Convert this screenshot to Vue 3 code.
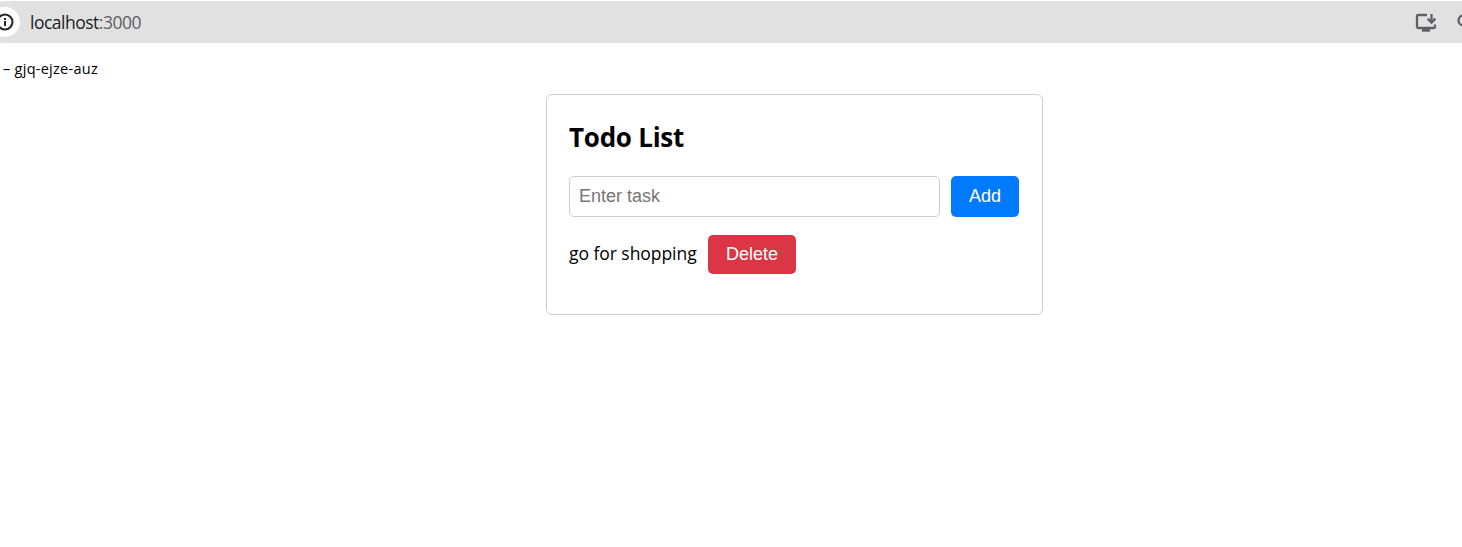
<script setup>
import { ref } from 'vue'

const task = ref('')
const tasks = ref(['go for shopping'])

function addTask() {
  const value = task.value.trim()
  if (!value) return
  tasks.value.push(value)
  task.value = ''
}

function removeTask(index) {
  tasks.value.splice(index, 1)
}
</script>

<template>
  <div class="page">
    <header class="address-bar">
      <span class="info">
        <svg width="18" height="18" viewBox="0 0 18 18" fill="none">
          <circle cx="9" cy="9" r="7.5" stroke="#242628" stroke-width="2.1" />
          <path d="M9 8v5M9 4.9v2" stroke="#242628" stroke-width="2" />
        </svg>
      </span>
      <span class="url"><span class="host">localhost</span><span class="port">:3000</span></span>
      <svg class="install" width="22" height="20" viewBox="0 0 22 20" fill="none" stroke="#606164" stroke-width="2.3">
        <path d="M12 2H3.2Q2 2 2 3.2V13.8Q2 15 3.2 15H18.8Q20 15 20 13.8V11.5" />
        <path d="M16.5 1v8M12.6 5.6L16.5 9.5l3.9-3.9" />
        <path d="M7 17h8" stroke-width="3.4" />
      </svg>
      <svg class="search" width="16" height="16" viewBox="0 0 16 16" fill="none" stroke="#606164" stroke-width="2.3">
        <circle cx="6.5" cy="6.5" r="5" />
        <path d="M10 10l5 5" />
      </svg>
    </header>
    <div class="meeting"><span>– gjq-ejze-auz</span></div>
    <main class="card">
      <h2><span>Todo List</span></h2>
      <form class="entry" @submit.prevent="addTask">
        <input v-model="task" type="text" placeholder="Enter task" />
        <button class="add" type="submit">Add</button>
      </form>
      <ul>
        <li v-for="(item, index) in tasks" :key="index">
          <span class="name">{{ item }}</span>
          <button class="delete" @click="removeTask(index)">Delete</button>
        </li>
      </ul>
    </main>
  </div>
</template>

<style>
body {
  margin: 0;
  background: #fff;
}
</style>

<style scoped>
* {
  box-sizing: border-box;
}
.page {
  height: 547px;
  overflow: hidden;
  padding-top: 1px;
  font-family: "Open Sans", "Noto Sans", sans-serif;
  color: #000;
}
.address-bar {
  display: flex;
  align-items: center;
  height: 42px;
  margin-left: -16px;
  margin-right: -40px;
  padding-left: 6px;
  padding-right: 29px;
  border-radius: 21px;
  background: #e1e1e1;
}
.info {
  display: flex;
  align-items: center;
  justify-content: center;
  width: 30px;
  height: 30px;
  border-radius: 50%;
  background: #fff;
}
.url {
  margin-left: 10px;
  font-size: 17.5px;
  letter-spacing: -0.5px;
  white-space: nowrap;
}
.host {
  color: #202124;
}
.port {
  color: #5f6063;
}
.install {
  margin-left: auto;
  margin-top: 2px;
}
.search {
  margin-left: 20px;
}
.meeting {
  height: 51px;
  padding: 15px 0 0 3px;
  font-size: 14.5px;
  line-height: 21px;
  letter-spacing: 0.27px;
}
.card {
  width: 497px;
  height: 221px;
  margin-left: 546px;
  padding: 22px;
  border: 1px solid #ccc;
  border-radius: 6px;
}
h2 {
  margin: 0;
  height: 59px;
  font-size: 26px;
  line-height: 40px;
  font-weight: 700;
  letter-spacing: -0.25px;
}
.entry {
  display: flex;
  gap: 11px;
}
input,
button {
  font-family: "Liberation Sans", Arial, sans-serif;
  font-size: 18px;
  border-radius: 5px;
}
input {
  width: 371px;
  height: 41px;
  padding: 0 9px;
  border: 1px solid #ccc;
  outline: none;
}
input::placeholder {
  color: #757575;
}
button {
  padding: 0;
  border: 0;
  color: #fff;
}
.add {
  width: 68px;
  height: 41px;
  background: #007bff;
}
ul {
  list-style: none;
  margin: 18px 0 0;
  padding: 0;
}
li {
  display: flex;
  align-items: center;
  height: 39px;
}
.name {
  width: 139px;
  padding-bottom: 3px;
  font-size: 17.5px;
  letter-spacing: -0.05px;
  white-space: nowrap;
}
.delete {
  width: 88px;
  height: 39px;
  background: #dc3545;
}
</style>
